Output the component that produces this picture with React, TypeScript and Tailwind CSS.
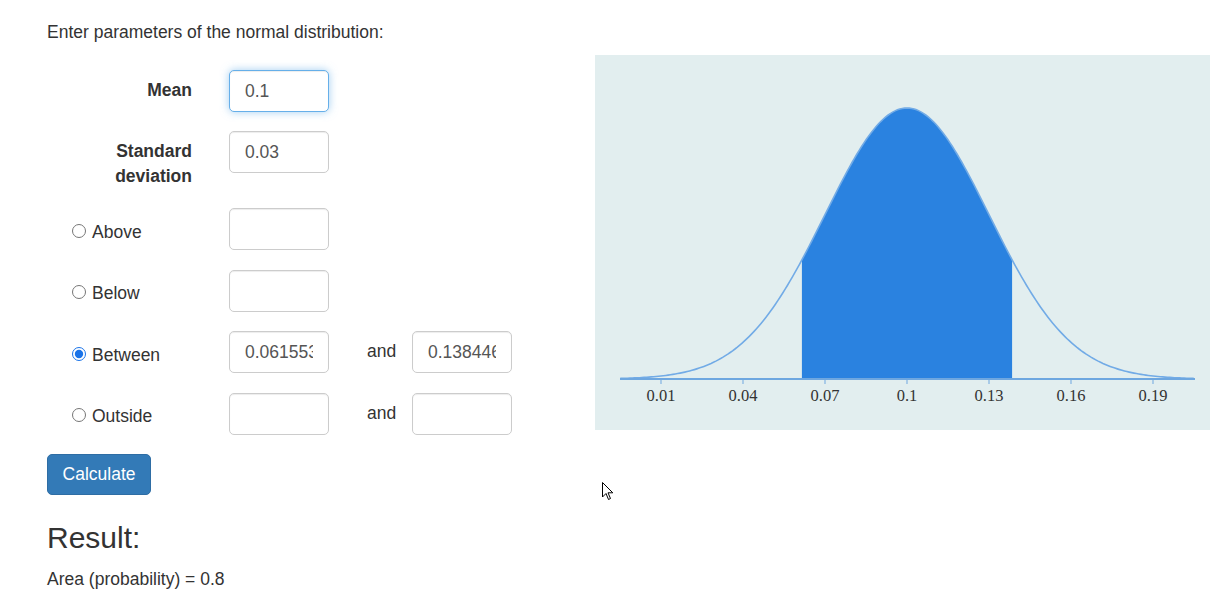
import { useState } from 'react';

const MEAN = 0.1;
const SD = 0.03;
const AXIS_Y = 324;
const AMP = 271;
const PX_PER_UNIT = 82 / 0.03;

const xOf = (v: number) => 312 + (v - MEAN) * PX_PER_UNIT;
const yOf = (v: number) => AXIS_Y - AMP * Math.exp(-0.5 * ((v - MEAN) / SD) ** 2);

const curvePath = (from: number, to: number, steps: number) => {
  const pts: string[] = [];
  for (let i = 0; i <= steps; i++) {
    const v = from + ((to - from) * i) / steps;
    pts.push(`${xOf(v).toFixed(2)},${yOf(v).toFixed(2)}`);
  }
  return pts;
};

const Chart = ({ a, b }: { a: number; b: number }) => {
  const line = curvePath(-0.0049, 0.2049, 240);
  const area = curvePath(a, b, 120);
  const fill = `M${xOf(a).toFixed(2)},${AXIS_Y} L${area.join(' L')} L${xOf(b).toFixed(2)},${AXIS_Y} Z`;
  const ticks = [0.01, 0.04, 0.07, 0.1, 0.13, 0.16, 0.19];

  return (
    <div className="w-[615px] h-[375px] bg-[#e2eeef] shrink-0">
      <svg width="615" height="375" viewBox="0 0 615 375">
        <path d={fill} fill="#2a82e0" />
        <polyline points={line.join(' ')} fill="none" stroke="#72abe6" strokeWidth="1.6" />
        <line x1="25" y1={AXIS_Y} x2="600" y2={AXIS_Y} stroke="#6ea7e0" strokeWidth="2" />
        {ticks.map((t) => (
          <g key={t}>
            <line x1={xOf(t)} y1={AXIS_Y} x2={xOf(t)} y2={AXIS_Y + 5} stroke="#6ea7e0" strokeWidth="1" />
            <text
              x={xOf(t)}
              y={AXIS_Y + 22}
              textAnchor="middle"
              fontSize="16.5"
              fill="#333"
              fontFamily="'Liberation Serif', 'Times New Roman', serif"
            >
              {t}
            </text>
          </g>
        ))}
      </svg>
    </div>
  );
};

const inputCls =
  'w-[100px] h-[42px] px-[15px] border rounded-[5px] text-[17.5px] text-[#555] bg-white outline-none';
const idle = 'border-[#ccc] shadow-[inset_0_1px_1px_rgba(0,0,0,0.075)]';
const focused = 'border-[#66afe9] shadow-[inset_0_1px_1px_rgba(0,0,0,0.075),0_0_8px_rgba(102,175,233,0.6)]';

export default function App() {
  const [mean, setMean] = useState('0.1');
  const [sd, setSd] = useState('0.03');
  const [mode, setMode] = useState('between');
  const [lo, setLo] = useState('0.0615535');
  const [hi, setHi] = useState('0.1384465');

  const radioRow = (key: string, label: string, withAnd: boolean, v1 = '', v2 = '') => (
    <div className="flex items-start mb-[19.5px]">
      <label className="w-[145px] pl-[25px] pt-[11.5px] flex items-center gap-[6px] cursor-pointer">
        <input
          type="radio"
          name="mode"
          checked={mode === key}
          onChange={() => setMode(key)}
          className="w-[14px] h-[14px] m-0 -mt-[3px] accent-[#1a73e8]"
        />
        <span>{label}</span>
      </label>
      <input
        type="text"
        value={v1}
        onChange={(e) => key === 'between' && setLo(e.target.value)}
        className={`${inputCls} ${idle} ml-[37px]`}
      />
      {withAnd && (
        <>
          <span className="ml-[38px] pt-[8px] w-[45px]">and</span>
          <input
            type="text"
            value={v2}
            onChange={(e) => key === 'between' && setHi(e.target.value)}
            className={`${inputCls} ${idle}`}
          />
        </>
      )}
    </div>
  );

  return (
    <div className="relative w-[1210px] h-[602px] overflow-hidden bg-white text-[#333] text-[17.5px] leading-[25px] font-['Liberation_Sans',Arial,sans-serif]">
      <div className="flex pl-[47px] pt-[20px]">
        <div className="w-[548px] shrink-0">
          <p className="mb-[25px]">Enter parameters of the normal distribution:</p>

          <div className="flex items-start mb-[19px]">
            <label className="w-[145px] text-right font-bold pt-[7.5px]">Mean</label>
            <input
              type="text"
              value={mean}
              onChange={(e) => setMean(e.target.value)}
              className={`${inputCls} ${focused} ml-[37px]`}
            />
          </div>

          <div className="flex items-start mb-[19px]">
            <label className="w-[145px] text-right font-bold pt-[8px]">
              Standard
              <br />
              deviation
            </label>
            <input
              type="text"
              value={sd}
              onChange={(e) => setSd(e.target.value)}
              className={`${inputCls} ${idle} ml-[37px]`}
            />
          </div>

          {radioRow('above', 'Above', false)}
          {radioRow('below', 'Below', false)}
          {radioRow('between', 'Between', true, lo, hi)}
          {radioRow('outside', 'Outside', true)}

          <button className="w-[104px] h-[41px] bg-[#337ab7] border border-[#2e6da4] rounded-[5px] text-white text-[17.5px]">
            Calculate
          </button>

          <h3 className="mt-[26px] text-[30px] leading-[33px] font-normal">Result:</h3>
          <p className="mt-[13px]">Area (probability) = 0.8</p>
        </div>

        <div className="mt-[35px]">
          <Chart a={0.0615535} b={0.1384465} />
        </div>
      </div>

      {/* mouse pointer left in the shot */}
      <svg className="absolute left-[602px] top-[482px]" width="12" height="19" viewBox="0 0 12 19">
        <path d="M0.5 0.5 L0.5 15 L4 11.5 L6.5 17.5 L8.5 16.5 L6 10.8 L10.8 10.8 Z" fill="#fff" stroke="#000" strokeWidth="1" />
      </svg>
    </div>
  );
}
